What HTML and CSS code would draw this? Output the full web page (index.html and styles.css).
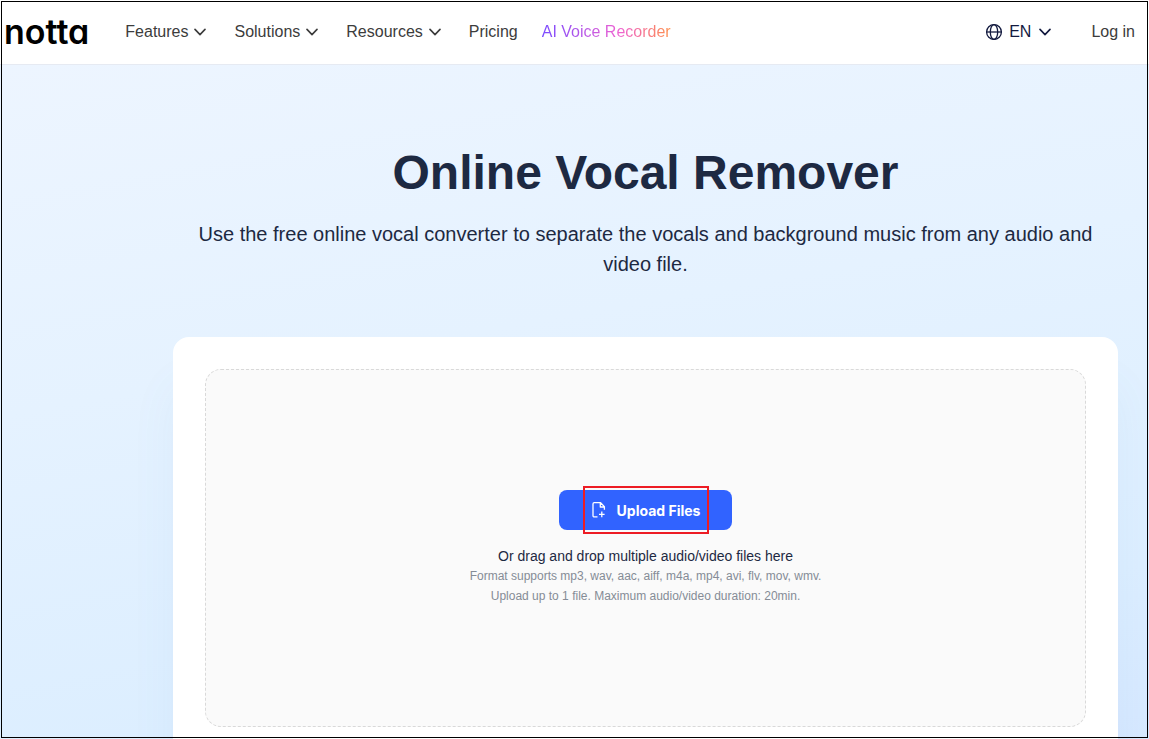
FILE: index.html
```html
<!DOCTYPE html>
<html lang="en">
<head>
<meta charset="utf-8">
<meta name="viewport" content="width=device-width, initial-scale=1">
<title>Online Vocal Remover</title>
<link rel="stylesheet" href="styles.css">
</head>
<body>
<div class="page">
  <header class="header">
    <a class="logo" href="#">notta</a>
    <nav class="nav">
      <button class="nav-item" type="button">Features
        <svg class="chevron" viewBox="0 0 12 8"><path d="M1 1.4 6 6.6 11 1.4"/></svg>
      </button>
      <button class="nav-item" type="button">Solutions
        <svg class="chevron" viewBox="0 0 12 8"><path d="M1 1.4 6 6.6 11 1.4"/></svg>
      </button>
      <button class="nav-item" type="button">Resources
        <svg class="chevron" viewBox="0 0 12 8"><path d="M1 1.4 6 6.6 11 1.4"/></svg>
      </button>
      <a class="nav-item nav-link" href="#">Pricing</a>
      <a class="nav-item nav-promo" href="#">AI Voice Recorder</a>
    </nav>
    <div class="account">
      <button class="language" type="button">
        <svg class="globe" viewBox="0 0 18 18"><circle cx="9" cy="9" r="7.4"/><ellipse cx="9" cy="9" rx="3.7" ry="7.4"/><path d="M1.6 9h14.8"/></svg>
        EN
        <svg class="chevron language-chevron" viewBox="0 0 12 8"><path d="M1 1.4 6 6.6 11 1.4"/></svg>
      </button>
      <a class="login" href="#">Log in</a>
    </div>
  </header>
  <main class="hero">
    <h1 class="title">Online Vocal Remover</h1>
    <p class="subtitle">Use the free online vocal converter to separate the vocals and background music from any audio and video file.</p>
    <section class="card">
      <div class="dropzone">
        <button class="upload" type="button">
          <svg class="file-icon" viewBox="0 0 16 18"><path d="M6.5 15.9H3.2a1.2 1.2 0 0 1-1.2-1.2V2.9a1.2 1.2 0 0 1 1.2-1.2h6.4L13.4 5.6V8.8M9.3 2v4h4M10.8 10.6v5.6M8 13.4h5.6"/></svg>
          Upload Files
        </button>
        <p class="drop-text">Or drag and drop multiple audio/video files here</p>
        <p class="drop-note">Format supports mp3, wav, aac, aiff, m4a, mp4, avi, flv, mov, wmv.</p>
        <p class="drop-note">Upload up to 1 file. Maximum audio/video duration: 20min.</p>
      </div>
    </section>
  </main>
  <div class="frame"></div>
</div>
</body>
</html>
```

FILE: styles.css
```css
* {
  box-sizing: border-box;
}

body,
h1,
p {
  margin: 0;
}

body {
  font-family: "Liberation Sans", Arial, sans-serif;
  color: #1d2942;
}

button {
  padding: 0;
  border: 0;
  background: none;
  font: inherit;
  color: inherit;
  cursor: pointer;
}

a {
  color: inherit;
  text-decoration: none;
}

.page {
  position: relative;
  display: flex;
  flex-direction: column;
  min-height: 100vh;
}

.header {
  display: flex;
  align-items: center;
  height: 65px;
  padding: 0 14px 0 4px;
  border-bottom: 1px solid #e6eaf2;
  background: #fff;
  font-size: 16px;
  line-height: 24px;
  color: #3c3c3c;
}

.logo {
  font-family: Inter, sans-serif;
  font-size: 34px;
  font-weight: 600;
  line-height: 40px;
  font-feature-settings: "cv11";
  color: #000;
}

.nav {
  display: flex;
  align-items: center;
  gap: 28px;
  margin-left: 36px;
}

.nav-item {
  display: flex;
  align-items: center;
  gap: 6px;
  white-space: nowrap;
}

.nav-promo {
  margin-left: -4px;
  background: linear-gradient(90deg, #7a4bff, #ee62d2 60%, #ff8f4a);
  background-clip: text;
  color: transparent;
}

.chevron {
  width: 12px;
  height: 8px;
  fill: none;
  stroke: currentColor;
  stroke-width: 1.6;
  stroke-linecap: round;
  stroke-linejoin: round;
}

.account {
  display: flex;
  align-items: center;
  gap: 40px;
  margin-left: auto;
}

.language {
  display: flex;
  align-items: center;
  gap: 6px;
  color: #131a3f;
}

.language-chevron {
  margin-left: 2px;
}

.globe {
  width: 18px;
  height: 18px;
  fill: none;
  stroke: currentColor;
  stroke-width: 1.3;
}

.hero {
  display: flex;
  flex: 1;
  flex-direction: column;
  padding: 72px 31px 0 173px;
  background: linear-gradient(170deg, #edf5ff 0%, #e5f2ff 40%, #dceeff 80%, #d6e8ff 100%);
  text-align: center;
}

.title {
  font-size: 48px;
  line-height: 72px;
}

.subtitle {
  margin-top: 10px;
  font-size: 20px;
  line-height: 30px;
}

.card {
  flex: 1;
  margin-top: 58px;
  padding: 32px 32px 12px;
  border-radius: 16px 16px 0 0;
  background: #fff;
  box-shadow: 0 48px 48px rgba(80, 130, 190, 0.06);
  clip-path: inset(0 -60px 0 -60px);
}

.dropzone {
  display: flex;
  flex-direction: column;
  align-items: center;
  justify-content: center;
  min-height: 358px;
  border: 1px dashed #d9d9d9;
  border-radius: 16px;
  background: #fafafa;
}

.upload {
  position: relative;
  display: flex;
  align-items: center;
  gap: 10px;
  height: 40px;
  margin-bottom: 16px;
  padding: 0 32px;
  border-radius: 8px;
  background: #3163ff;
  font-family: Inter, sans-serif;
  font-size: 14px;
  font-weight: 700;
  color: #fff;
}

.upload::after {
  position: absolute;
  inset: -4px 23px -4px 24px;
  border: 2px solid #ed1c24;
  content: "";
}

.file-icon {
  width: 16px;
  height: 18px;
  fill: none;
  stroke: currentColor;
  stroke-width: 1.3;
  stroke-linejoin: round;
}

.drop-text {
  font-size: 14px;
  line-height: 20px;
}

.drop-note {
  font-size: 12px;
  line-height: 20px;
  color: #858c96;
}

.frame {
  position: absolute;
  inset: 1px;
  border: 1px solid #000;
  pointer-events: none;
}
```
